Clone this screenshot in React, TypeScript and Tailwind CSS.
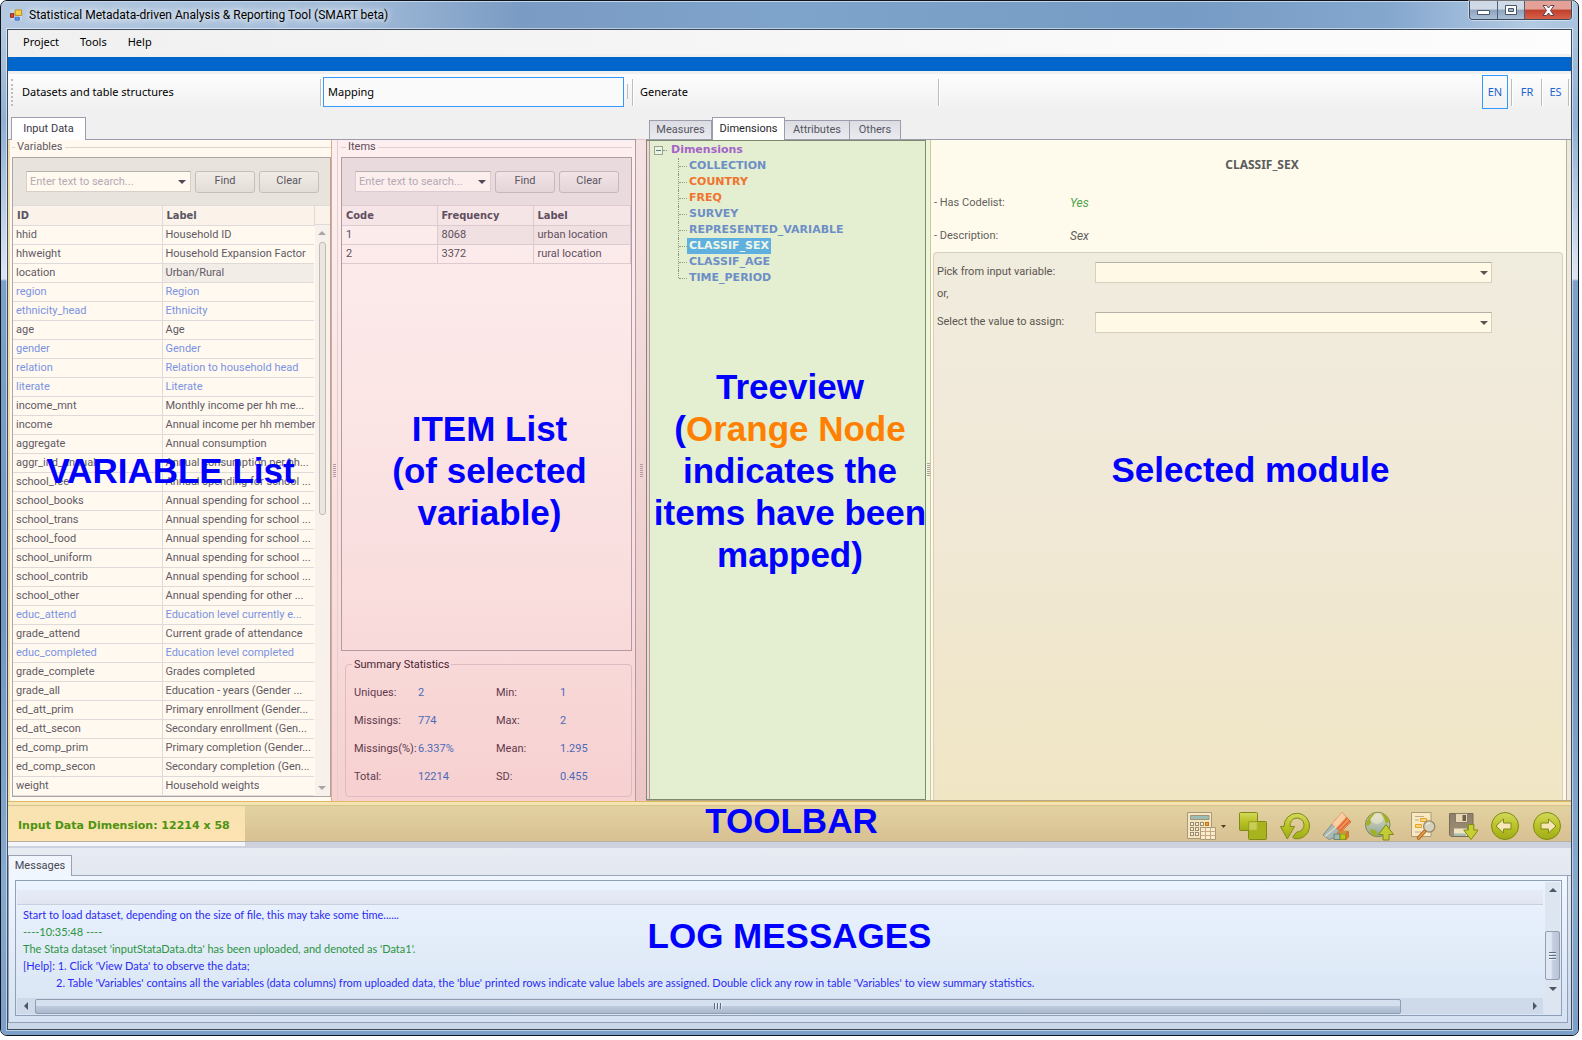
import type { ReactNode } from "react";

type VariableRow = { id: string; label: string; coded?: boolean };

const variables: VariableRow[] = [
  { id: "hhid", label: "Household ID" },
  { id: "hhweight", label: "Household Expansion Factor" },
  { id: "location", label: "Urban/Rural" },
  { id: "region", label: "Region", coded: true },
  { id: "ethnicity_head", label: "Ethnicity", coded: true },
  { id: "age", label: "Age" },
  { id: "gender", label: "Gender", coded: true },
  { id: "relation", label: "Relation to household head", coded: true },
  { id: "literate", label: "Literate", coded: true },
  { id: "income_mnt", label: "Monthly income per hh me..." },
  { id: "income", label: "Annual income per hh member" },
  { id: "aggregate", label: "Annual consumption" },
  { id: "aggr_ind_annual", label: "Annual consumption per hh..." },
  { id: "school_fee", label: "Annual spending for school ..." },
  { id: "school_books", label: "Annual spending for school ..." },
  { id: "school_trans", label: "Annual spending for school ..." },
  { id: "school_food", label: "Annual spending for school ..." },
  { id: "school_uniform", label: "Annual spending for school ..." },
  { id: "school_contrib", label: "Annual spending for school ..." },
  { id: "school_other", label: "Annual spending for other ..." },
  { id: "educ_attend", label: "Education level currently e...", coded: true },
  { id: "grade_attend", label: "Current grade of attendance" },
  { id: "educ_completed", label: "Education level completed", coded: true },
  { id: "grade_complete", label: "Grades completed" },
  { id: "grade_all", label: "Education - years (Gender ..." },
  { id: "ed_att_prim", label: "Primary enrollment (Gender..." },
  { id: "ed_att_secon", label: "Secondary enrollment (Gen..." },
  { id: "ed_comp_prim", label: "Primary completion (Gender..." },
  { id: "ed_comp_secon", label: "Secondary completion (Gen..." },
  { id: "weight", label: "Household weights" },
];

const treeNodes = [
  { name: "COLLECTION", tone: "text-[#6d8fc6]" },
  { name: "COUNTRY", tone: "text-[#f0742f]" },
  { name: "FREQ", tone: "text-[#f0742f]" },
  { name: "SURVEY", tone: "text-[#6d8fc6]" },
  { name: "REPRESENTED_VARIABLE", tone: "text-[#6d8fc6]" },
  { name: "CLASSIF_SEX", tone: "bg-[#5fb0df] text-[#eef7e6]" },
  { name: "CLASSIF_AGE", tone: "text-[#6d8fc6]" },
  { name: "TIME_PERIOD", tone: "text-[#6d8fc6]" },
];

const stats = [
  ["Uniques:", "2", "Min:", "1"],
  ["Missings:", "774", "Max:", "2"],
  ["Missings(%):", "6.337%", "Mean:", "1.295"],
  ["Total:", "12214", "SD:", "0.455"],
];

function Caption({ children, className = "" }: { children: ReactNode; className?: string }) {
  return (
    <div className={`pointer-events-none absolute inset-0 z-10 flex items-center justify-center text-center font-['Liberation_Sans',Arial,sans-serif] text-[35px] leading-[42px] font-bold whitespace-nowrap text-[#0000ff] ${className}`}>
      <p>{children}</p>
    </div>
  );
}

function Triangle({ dir, className = "" }: { dir: "up" | "down" | "left" | "right"; className?: string }) {
  const d = { up: "M0 5 4 1 8 5z", down: "M0 2h8L4 6z", left: "M6 0v8L2 4z", right: "M2 0v8l4-4z" }[dir];
  return (
    <svg viewBox="0 0 8 8" className={`size-2 shrink-0 ${className}`} fill="currentColor" aria-hidden="true">
      <path d={d} />
    </svg>
  );
}

function SearchBar({ name, tone, field, button, width }: { name: string; tone: string; field: string; button: string; width: string }) {
  return (
    <div className={`flex h-[47px] items-center gap-1 pl-[13px] ${tone}`}>
      <div className={`flex h-[21px] shrink-0 items-center border border-t-[#b5b0b0] ${width} ${field}`}>
        <input aria-label={`Search ${name}`} placeholder="Enter text to search..." className="h-full w-full min-w-0 bg-transparent pl-[3px] text-[11px] text-[#5f5b66] outline-none placeholder:text-[#b3aab2]" />
        <button aria-label={`${name} search history`} className="flex h-full w-4 shrink-0 items-center justify-center text-[#4f4a55]"><Triangle dir="down" /></button>
      </div>
      <button className={`h-[22px] w-[60px] shrink-0 rounded-[3px] border text-[11px] text-[#5a5562] ${button}`}>Find</button>
      <button className={`h-[22px] w-[60px] shrink-0 rounded-[3px] border text-[11px] text-[#5a5562] ${button}`}>Clear</button>
    </div>
  );
}

function Grip() {
  return (
    <svg width="3" height="14" viewBox="0 0 3 14" aria-hidden="true">
      {[0, 2, 4, 6, 8, 10, 12].map((y) => <path key={y} d={`M0 ${y + 0.5}h3`} stroke="#b59aa2" />)}
    </svg>
  );
}

function VariablesPanel() {
  return (
    <section className="relative w-[324px] shrink-0 border-r border-l-2 border-r-[#e0a88f] border-l-[#f0dcae] bg-[#fff9ef] pb-1 pl-0.5">
      <h2 className="flex h-[17px] items-start text-[11px] text-[#5f5b66]">
        <span className="mt-[7px] w-[3px] border-t border-[#dcd6d2]" />
        <span className="px-0.5 leading-[14px]">Variables</span>
        <span className="mt-[7px] flex-1 border-t border-[#dcd6d2]" />
      </h2>
      <div className="border border-[#aaa6a8]">
        <SearchBar name="variables" tone="bg-[#e8e4dd]" field="border-[#d8d0c8] bg-[#fff9ef]" button="border-[#c4bfba] bg-linear-to-b from-[#f1ede6] to-[#e2ded7]" width="w-[165px]" />
        <div className="flex">
          <table className="w-[301px] table-fixed border-collapse text-[11px] leading-[18px]">
            <colgroup><col className="w-[149px]" /><col className="w-[152px]" /></colgroup>
            <thead>
              <tr className="h-5 bg-[#fbf2ea] text-left font-['DejaVu_Sans_Condensed','DejaVu_Sans',sans-serif] text-[#5a5562]">
                <th className="border-t border-r border-b border-[#dedada] p-0 pl-1">ID</th>
                <th className="border-t border-r border-b border-[#dedada] p-0 pl-1">Label</th>
              </tr>
            </thead>
            <tbody>
              {variables.map((v) => (
                <tr key={v.id} className={v.coded ? "h-[19px] text-[#7b93e2]" : "h-[19px] text-[#5f5b66]"}>
                  <td className="border-r border-b border-[#dedada] p-0 pl-[3px]">{v.id}</td>
                  <td className={`border-b border-[#dedada] p-0 pl-[3px] whitespace-nowrap ${v.id === "location" ? "bg-[#f3ede8]" : ""}`}>{v.label}</td>
                </tr>
              ))}
            </tbody>
          </table>
          <div className="flex w-4 flex-col bg-[#f8f1eb]">
            <div className="h-5 border-t border-b border-[#dedada] bg-[#fbf2ea]" />
            <div className="flex h-[17px] items-center justify-center text-[#a9a4a5]"><Triangle dir="up" /></div>
            <div className="mx-auto h-[273px] w-[7px] rounded-[3px] border border-[#c2bcb9] bg-[#ece6e0]" />
            <div className="mt-auto flex h-4 items-center justify-center text-[#a9a4a5]"><Triangle dir="down" /></div>
          </div>
        </div>
      </div>
      <Caption>VARIABLE List</Caption>
    </section>
  );
}

function ItemsPanel() {
  const cell = "border-r border-b border-[#ddcace] p-0 pl-1";
  return (
    <section className="relative flex min-w-0 flex-1 flex-col px-[3px] pb-1">
      <h2 className="flex h-[17px] items-start text-[11px] text-[#5f4a58]">
        <span className="mt-[7px] w-[5px] border-t border-[#e3cdd0]" />
        <span className="px-0.5 leading-[14px]">Items</span>
        <span className="mt-[7px] flex-1 border-t border-[#e3cdd0]" />
      </h2>
      <div className="flex-1 border border-[#b39aa2]">
        <SearchBar name="items" tone="bg-[#e8dadd]" field="border-[#dccbd0] bg-[#fdeeee]" button="border-[#c9b6bb] bg-linear-to-b from-[#f2e4e6] to-[#e3d5d8]" width="w-[136px]" />
        <table className="w-full table-fixed border-collapse text-[11px] leading-[18px] text-[#5f4f60]">
          <colgroup><col className="w-[95px]" /><col className="w-24" /><col /></colgroup>
          <thead>
            <tr className="h-5 bg-[#f5e5e6] text-left font-['DejaVu_Sans_Condensed','DejaVu_Sans',sans-serif]">
              <th className={`border-t ${cell}`}>Code</th>
              <th className={`border-t ${cell}`}>Frequency</th>
              <th className={`border-t ${cell}`}>Label</th>
            </tr>
          </thead>
          <tbody>
            <tr className="h-[19px]"><td className={cell}>1</td><td className={`bg-[#f0e0e2] ${cell}`}>8068</td><td className={`bg-[#f0e0e2] ${cell}`}>urban location</td></tr>
            <tr className="h-[19px]"><td className={cell}>2</td><td className={cell}>3372</td><td className={cell}>rural location</td></tr>
          </tbody>
        </table>
      </div>
      <fieldset className="mt-1.5 ml-1 h-[140px] rounded border border-[#dcbcc2] pl-1.5 text-[11px] text-[#5f3a4c]">
        <legend className="px-0.5 leading-[15px] text-[#4a2433]">Summary Statistics</legend>
        <dl className="grid grid-cols-[64px_78px_64px_1fr] gap-y-[13px] pt-[13px] pl-0.5 leading-[15px]">
          {stats.flatMap(([a, b, c, d]) => [
            <dt key={a}>{a}</dt>, <dd key={a + "v"} className="text-[#4a6cb8]">{b}</dd>,
            <dt key={c}>{c}</dt>, <dd key={c + "v"} className="text-[#4a6cb8]">{d}</dd>,
          ])}
        </dl>
      </fieldset>
      <Caption className="pl-1.5">ITEM List<br />(of selected<br />variable)</Caption>
    </section>
  );
}

function TreePanel() {
  return (
    <section className="relative flex w-[280px] shrink-0 border border-[#7c8a6e] bg-[#e4eed1]">
      <div className="w-[3px] border-r border-[#b39aa2] bg-[#f2d6d6]" />
      <div className="flex-1 pt-px font-['DejaVu_Sans',Verdana,sans-serif] text-[11px] leading-4 font-bold">
        <div className="flex items-center pl-1 text-[#a465c9]">
          <button aria-label="Collapse Dimensions" className="flex size-[9px] items-center justify-center border border-[#98a394] bg-[#eef4e2]"><span className="h-px w-[5px] bg-[#5a7a8a]" /></button>
          <span className="mr-1 w-1 border-t border-dotted border-[#8a9a80]" />
          Dimensions
        </div>
        <ul>
          {treeNodes.map((n, i) => (
            <li key={n.name} className="flex h-4 pl-7">
              <span className={`w-px border-l border-dotted border-[#8a9a80] ${i === treeNodes.length - 1 ? "h-2" : "h-4"}`} />
              <span className="mt-2 w-2 border-t border-dotted border-[#8a9a80]" />
              <span className={`px-0.5 ${n.tone}`}>{n.name}</span>
            </li>
          ))}
        </ul>
      </div>
      <Caption className="pt-0.5 pl-2">
        Treeview<br />(<span className="text-[#ff8000]">Orange Node</span><br />indicates the<br />items have been<br />mapped)
      </Caption>
    </section>
  );
}

function Picker({ id, label }: { id: string; label: string }) {
  return (
    <div className="flex h-[21px] items-center">
      <label htmlFor={id} className="w-[158px] shrink-0">{label}</label>
      <div className="relative h-[21px] w-[397px]">
        <select id={id} className="h-full w-full appearance-none border border-[#d6d0c0] border-t-[#b5b1a6] bg-[#fff9e6]"><option></option></select>
        <Triangle dir="down" className="pointer-events-none absolute top-[7px] right-1 text-[#5a5550]" />
      </div>
    </div>
  );
}

function DetailPanel() {
  return (
    <section className="relative flex flex-1 flex-col border-r border-l border-r-[#b5b0a4] border-l-[#d3c692] bg-linear-to-b from-[#fffbec] to-[#fff8ea] pr-[3px] pl-0.5 text-[11px] text-[#625f5c]">
      <h2 className="pt-[17px] pl-7 text-center font-['Noto_Sans',sans-serif] text-xs leading-4 font-bold text-[#5c5c5c]">CLASSIF_SEX</h2>
      <dl className="grid grid-cols-[136px_1fr] gap-y-[17px] pt-[22px] pb-2 pl-px leading-4">
        <dt>- Has Codelist:</dt><dd className="text-xs leading-4 text-[#4fa24c] italic">Yes</dd>
        <dt>- Description:</dt><dd className="text-xs leading-4 italic">Sex</dd>
      </dl>
      <div className="flex-1 rounded-t border-t border-r border-l border-[#d5d0c0] bg-linear-to-b from-[#f0ecde] via-[#f1e8d6] via-50% to-[#f0e6c4] pt-[9px] pl-[3px] text-[#5a5650]">
        <Picker id="input-variable" label="Pick from input variable:" />
        <p className="pt-[3px] pb-[11px] leading-[15px]">or,</p>
        <Picker id="assigned-value" label="Select the value to assign:" />
      </div>
      <Caption className="pl-1">Selected module</Caption>
    </section>
  );
}

const G = "url(#leaf)";
const E = "#7f8a17";

function Icon({ children }: { children: ReactNode }) {
  return <svg width="30" height="30" viewBox="0 0 30 30" aria-hidden="true">{children}</svg>;
}

const tools: { name: string; icon: ReactNode }[] = [
  {
    name: "Copy",
    icon: <Icon><rect x="1.5" y="1.5" width="18" height="18" rx="1" fill={G} stroke={E} /><rect x="10.5" y="10.5" width="18" height="18" rx="1" fill="#a9b31d" stroke={E} /><path d="M11 11h8v8h-8z" fill="#c9cc55" stroke="#b5ba38" /></Icon>,
  },
  {
    name: "Refresh",
    icon: <Icon><path d="M4 15.500A12.800 12.800 0 1 1 14 27.600L12.600 26l4.200-5A7 7 0 1 0 10.200 15.500h4.300L7.300 28 .5 15.500z" fill={G} stroke={E} strokeLinejoin="round" /></Icon>,
  },
  {
    name: "Clear mapping",
    icon: (
      <Icon>
        <path d="M1 24 10 13l9 8-6 5.500-6 2z" fill="#a9b8b0" stroke="#7f938f" />
        <path d="M10 13 20 1.500l9 9.500-10 10z" fill="#ee9a63" stroke="#d9773a" />
        <path d="m10 13 10-11.500 4 4.500-10 11z" fill="#f8cfa5" />
        <path d="m15.500 18 10-11M17.500 20 28 9.500" stroke="#e2612a" strokeWidth="1.200" />
        <path d="M3 25.500 14 16" stroke="#d5dccb" strokeWidth="1.500" />
        <path d="m15 22 2-2h9l-2 2z" fill="#f39a3b" stroke="#b5701c" strokeWidth=".6" />
        <path d="M12 23h6v5.500h-6z" fill="#9dbbb4" stroke="#5f7468" strokeWidth=".8" />
        <path d="M18 23h6v5.500h-6z" fill="#b9c618" stroke={E} strokeWidth=".8" />
        <path d="m24 23 2.500-2.500V26L24 28.500z" fill="#e9821f" stroke="#a75a12" strokeWidth=".6" />
      </Icon>
    ),
  },
  {
    name: "Upload",
    icon: (
      <Icon>
        <circle cx="13.700" cy="13.500" r="12.300" fill="url(#globe)" stroke="#83894c" />
        <path d="M2 14C3 7 7 3 11 2l-2 4-3 2 1 4-3 3zM17 2c4 1 7 4 8.500 8L22 13l-2-6zM6 18l5 1 3 4-3 2.500C8 24 6 21 6 18z" fill="#a3b024" />
        <ellipse cx="13" cy="8" rx="6" ry="5" fill="#f3ead0" opacity=".55" />
        <path d="m22 13.500 7.500 10H25V29h-6v-5.500h-4.500z" fill="#c4cc35" stroke={E} strokeLinejoin="round" />
      </Icon>
    ),
  },
  {
    name: "Preview",
    icon: (
      <Icon>
        <path d="M5.500 1.500h19.500v24H5.500z" fill="#f8e9c3" stroke="#a99a78" />
        <path d="M9 5.500h9M9 9h4M20 9h2M18 15h3M9 21h6" stroke="#b9ab8c" />
        <path d="M14.500 7.500h6v3h-6zM9.500 13.500h6v3h-6z" fill="#f9d68c" stroke="#eda31a" />
        <circle cx="23.200" cy="15.500" r="5.600" fill="#d4d2bc" stroke="#94866f" strokeWidth="1.300" />
        <path d="M20.500 14.500a3 3 0 0 1 3.500-2.500" stroke="#f6f1dc" fill="none" />
        <path d="m18.500 20.500-6 6.500" stroke="#a8611a" strokeWidth="3.400" strokeLinecap="round" />
        <path d="m18.500 20.500-6 6.500" stroke="#ee9d45" strokeWidth="1.800" strokeLinecap="round" />
      </Icon>
    ),
  },
  {
    name: "Save",
    icon: (
      <Icon>
        <path d="M1.500 2.500h23.500v23H3l-1.500-1.500z" fill="url(#disk)" stroke="#7a6c55" />
        <path d="M7.500 2.500h12v9h-12z" fill="#e6d6b3" stroke="#8b7d63" />
        <path d="M14.500 4h3.500v6h-3.500z" fill="#6c604c" />
        <path d="M6 17.500h13V25H6z" fill="#f2e4c0" />
        <path d="M6 22.500h12V25H6z" fill="#a9bcb2" />
        <path d="M20.300 13.500h5.500V19h4.500L23 28.500 15.700 19h4.600z" fill="#c8d030" stroke={E} strokeLinejoin="round" />
      </Icon>
    ),
  },
  {
    name: "Previous",
    icon: <Icon><circle cx="15" cy="15" r="13.500" fill={G} stroke={E} /><path d="M6 15 13.500 8v4h7.500v6h-7.500v4z" fill="#f7e6b8" stroke={E} strokeLinejoin="round" /></Icon>,
  },
  {
    name: "Next",
    icon: <Icon><circle cx="15" cy="15" r="13.500" fill={G} stroke={E} /><path d="M24 15 16.500 8v4H9v6h7.500v4z" fill="#f7e6b8" stroke={E} strokeLinejoin="round" /></Icon>,
  },
];

function Toolbar() {
  return (
    <div className="relative border-b border-[#b5b0a0] bg-linear-to-b from-[#e4d5a3] to-[#d8c092]">
      <svg width="0" height="0" className="absolute" aria-hidden="true">
        <defs>
          <linearGradient id="leaf" x1="0" y1="0" x2="0" y2="1"><stop offset="0" stopColor="#d3d95e" /><stop offset=".5" stopColor="#bac326" /><stop offset="1" stopColor="#9fac17" /></linearGradient>
          <linearGradient id="globe" x1="0" y1="0" x2="0" y2="1"><stop offset="0" stopColor="#dfe0c2" /><stop offset="1" stopColor="#8da39a" /></linearGradient>
          <linearGradient id="disk" x1="0" y1="0" x2="0" y2="1"><stop offset="0" stopColor="#8d7f69" /><stop offset="1" stopColor="#9d9078" /></linearGradient>
        </defs>
      </svg>
      <div className="h-[5px] border-t border-b border-t-[#e2b864] border-b-[#d5c28c] bg-[#f3e4b2]" />
      <div className="flex h-[35px] justify-between">
        <p className="flex w-[237px] items-center bg-linear-to-b from-[#f7e3b0] to-[#fde2b2] pt-1.5 pl-2.5 font-['DejaVu_Sans',Verdana,sans-serif] text-[11px] font-bold whitespace-nowrap text-[#4c9410]">Input Data Dimension: 12214 x 58</p>
        <div className="flex items-end gap-3 pr-[9px]">
          <button aria-label="Calculate" className="flex w-10 items-center gap-[5px]">
            <Icon>
              <path d="M1.500 1.500h24v26h-24z" fill="#f6e6c0" stroke="#a8997c" />
              <path d="M4.500 4.500h18.500v4H4.500z" fill="#9dbdb4" stroke="#a0957a" />
              {[4.5, 9.5, 14.5, 19.5].map((x) => [11.5, 16.5, 21.5].map((y) => (
                <rect key={`${x}-${y}`} x={x} y={y} width="3" height="3" fill={x > 19 && y < 12 ? "#eda13a" : "#faf0d4"} stroke={x > 19 && y < 12 ? "#c9721b" : "#9a8c70"} />
              )))}
              <path d="M14.500 16.500h15v12h-15z" fill="#faecc8" stroke="#a8977a" />
              <path d="M19.500 16.500v12M24.500 16.500v12M14.500 20.500h15M14.500 24.500h15" stroke="#c4a988" />
            </Icon>
            <svg width="5" height="3" viewBox="0 0 5 3" aria-hidden="true"><path d="M0 0h5L2.500 3z" fill="#4f3f20" /></svg>
          </button>
          {tools.map((t) => (
            <button key={t.name} aria-label={t.name}>{t.icon}</button>
          ))}
        </div>
      </div>
      <Caption className="pl-1">TOOLBAR</Caption>
    </div>
  );
}

function Messages() {
  return (
    <div className="relative bg-linear-to-b from-[#e8ecf3] to-[#cbd7e8] pb-1.5">
      <div className="h-1.5 bg-[#cdd2de]"><div className="h-1 w-[237px] bg-[#f3f5fb]" /></div>
      <div className="flex h-7 items-end">
        <button className="h-[21px] w-[64px] border-t border-r border-l border-[#9aa1b4] bg-[#f1f5fe] text-[11px] text-[#45454f]">Messages</button>
        <span className="flex-1 border-b border-[#9aa5b8]" />
      </div>
      <div className="mr-[3px] h-[147px] border-r border-b border-l border-[#8f9fbc] bg-linear-to-b from-[#f1f7fe] to-[#d6e2f2] px-[5px] pt-1 pb-1.5 pl-1.5">
        <div className="flex h-full border border-[#8f9fb8] bg-linear-to-b from-[#ebf3fe] to-[#d9e5f4] p-px">
          <div className="flex min-w-0 flex-1 flex-col">
            <div className="mt-2 h-[15px] border-b border-[#c8d0de] bg-linear-to-b from-[#e6ecf7] to-[#e0e5f1]" />
            <pre className="flex-1 overflow-hidden pt-px pl-1.5 font-['Lato',Arial,sans-serif] text-[11px] leading-[17px] text-[#2a2af5]">
              <span className="block">Start to load dataset, depending on the size of file, this may take some time......</span>
              <span className="block text-[#2a9440]">----10:35:48 ----</span>
              <span className="block text-[#2a9440]">The Stata dataset 'inputStataData.dta' has been uploaded, and denoted as 'Data1'.</span>
              <span className="block">[Help]: 1. Click 'View Data' to observe the data;</span>
              <span className="block pl-[33px]">2. Table 'Variables' contains all the variables (data columns) from uploaded data, the 'blue' printed rows indicate value labels are assigned. Double click any row in table 'Variables' to view summary statistics.</span>
            </pre>
            <div className="flex h-4 items-center bg-[#cedaea] text-[#4a5566]">
              <span className="flex w-[18px] justify-center"><Triangle dir="left" /></span>
              <div className="flex h-[15px] w-[1366px] min-w-0 items-center justify-center gap-px rounded-[2px] border border-[#8f9db0] bg-linear-to-b from-[#d5e0ef] from-45% via-[#bccadd] via-50% to-[#abb8cd]">
                {[0, 1, 2].map((i) => <span key={i} className="h-1.5 w-0.5 border-l border-[#5f6d82] bg-white/60" />)}
              </div>
              <span className="ml-auto flex w-4 justify-center"><Triangle dir="right" /></span>
            </div>
          </div>
          <div className="ml-0.5 flex w-[15px] flex-col items-center bg-[#dde5f0] text-[#4a5566]">
            <span className="flex h-[17px] items-center"><Triangle dir="up" /></span>
            <div className="mt-8 flex h-[49px] w-[15px] flex-col items-center justify-center gap-px rounded-[2px] border border-[#929eb4] bg-linear-to-r from-[#dfe7f3] from-40% via-[#c6d0e1] via-50% to-[#b8c3d7]">
              {[0, 1, 2].map((i) => <span key={i} className="h-0.5 w-[7px] border-t border-[#5f6d82] bg-white/60" />)}
            </div>
            <span className="flex h-[17px] items-center"><Triangle dir="down" /></span>
          </div>
        </div>
      </div>
      <Caption>LOG MESSAGES</Caption>
    </div>
  );
}

function TitleBar() {
  return (
    <header className="flex h-7 items-start justify-between pl-[3px]">
      <h1 className="flex items-center gap-1.5 pt-1.5 text-xs leading-4 text-black [text-shadow:0_0_6px_#fff,0_0_10px_#fff]">
        <svg width="13" height="14" viewBox="0 0 14 14" aria-hidden="true">
          <path d="M.5 1h12.500v12H.5z" fill="#dce4ea" opacity=".5" />
          <path d="M5.500 1.500h7v6h-7z" fill="#f7cf4a" stroke="#b98a15" />
          <path d="M.5 5.500h3.500v4H.5z" fill="#d94a3a" stroke="#8f1f1a" />
          <path d="M5.500 9.500h4.500v3H5.500z" fill="#5b9af0" stroke="#3a6fc4" />
        </svg>
        Statistical Metadata-driven Analysis &amp; Reporting Tool (SMART beta)
      </h1>
      <div className="flex h-[19px] overflow-hidden rounded-b border-r border-b border-l border-[#3c4a5e] shadow-[0_0_0_1px_#ffffff70]">
        <button aria-label="Minimize" className="flex w-[28px] items-center justify-center border-r border-[#50607a] bg-linear-to-b from-[#cfdae6] from-45% via-[#8fa4bc] via-50% to-[#a9bfd6]">
          <svg width="13" height="12" viewBox="0 0 13 12" aria-hidden="true"><path d="M.5 6.500h12v4H.5z" fill="#fff" stroke="#4a5568" /></svg>
        </button>
        <button aria-label="Maximize" className="flex w-[27px] items-center justify-center border-r border-[#50607a] bg-linear-to-b from-[#cfdae6] from-45% via-[#8fa4bc] via-50% to-[#a9bfd6]">
          <svg width="12" height="11" viewBox="0 0 12 11" aria-hidden="true"><path d="M.5.5h11v9H.5z" fill="#fff" stroke="#4a5568" /><path d="M3.500 3.500h5v3h-5z" fill="#9fb2c8" stroke="#4a5568" /></svg>
        </button>
        <button aria-label="Close" className="flex w-[46px] items-center justify-center bg-linear-to-b from-[#e3a197] from-45% via-[#bf3f2a] via-50% to-[#d8604a]">
          <svg width="13" height="11" viewBox="0 0 13 11" aria-hidden="true"><path d="M1 .5h3.500l2 2.500 2-2.500H12L8.500 5.500l3.500 5H8.500l-2-2.500-2 2.500H1l3.500-5z" fill="#fff" stroke="#5a4550" strokeLinejoin="round" /></svg>
        </button>
      </div>
    </header>
  );
}

function StepStrip() {
  const rule = <span className="h-[27px] w-0.5 border-l border-[#bdbdbd] bg-white" />;
  return (
    <div className="mt-[3px] flex h-[37px] items-center justify-between bg-linear-to-b from-[#fdfdfd] to-[#f0f0f0] pb-px font-['Noto_Sans',sans-serif] text-[11px] text-black">
      <div className="flex items-center">
        <span className="ml-[3px] h-[27px] border-l-2 border-dotted border-[#bdbdbd]" />
        <button className="w-[307px] pl-[9px] text-left">Datasets and table structures</button>
        {rule}
        <button className="ml-px h-[30px] w-[301px] border border-[#3399ff] bg-[#fafafa] pl-1 text-left">Mapping</button>
        <span className="ml-[3px]">{rule}</span>
        <span className="ml-1 flex">{rule}</span>
        <button className="w-[304px] pl-1.5 text-left">Generate</button>
        {rule}
      </div>
      <div className="flex items-center pr-px text-[#1c63d2]">
        <button className="h-[34px] w-[26px] border border-[#3399ff]">EN</button>
        <span className="ml-[3px] flex">{rule}</span>
        <button className="w-7">FR</button>
        {rule}
        <button className="w-[25px]">ES</button>
        {rule}
      </div>
    </div>
  );
}

const tab = "h-[19px] border-t border-r border-[#9c9cac] bg-linear-to-b from-[#dcdde3] to-[#eaebf0] text-[#55555f]";

export default function App() {
  return (
    <div className="min-h-screen bg-white pr-[3px] pb-1 font-['Roboto',Tahoma,sans-serif] text-[11px]">
      <div className="rounded-[7px] border border-[#10141c] bg-[linear-gradient(90deg,#b4c9e1_0,#a3bcd9_22%,#7a9bc3_33%,#7fa4cb_50%,#769bc4_75%,#84a7ce_88%,#b3cae2_97%,#a9c3de_100%)]">
        <div className="rounded-[6px] border-t border-[#e4eef8]/70 bg-[linear-gradient(180deg,transparent_0,transparent_30px,#8fb0d4_120px,#d9e4f2_270px,#d9e4f2_277px,#7da1c8_279px,#7497c2_60%,#86a9cf_85%,#7b9fc8_100%)] px-1.5 pb-[5px]">
          <div className="-mt-px"><TitleBar /></div>
          <div className="border border-[#3c4a5e] bg-[#f0f0f0] shadow-[0_0_0_1px_#ffffff80]">
            <nav className="flex h-6 items-center gap-[21px] bg-linear-to-r from-[#f0f0f0] to-[#fdfdfd] pl-[15px] font-['Noto_Sans',sans-serif] text-[11px] text-black">
              <button>Project</button>
              <button>Tools</button>
              <button>Help</button>
            </nav>
            <div className="mt-[3px] h-3.5 bg-[#0066cc]" />
            <StepStrip />
            <main className="flex">
              <div className="flex w-[628px] shrink-0 flex-col">
                <div className="flex h-[29px] items-end border-b border-[#9c9cac] pl-[3px]">
                  <button className="-mb-px h-[23px] w-[75px] border-t border-r border-l border-[#9c9cac] bg-white text-[#3a3a48]">Input Data</button>
                </div>
                <div className="flex flex-1 border-r border-[#b39aa2]">
                  <VariablesPanel />
                  <div className="flex flex-1 bg-linear-to-b from-[#fdefef] via-[#fae0e0] via-60% to-[#f7d0d0]">
                    <div className="flex w-1.5 items-center justify-center border-r border-[#e3cdd0]"><Grip /></div>
                    <ItemsPanel />
                  </div>
                </div>
              </div>
              <div className="mt-[28px] flex w-2.5 shrink-0 items-center justify-center border-t border-[#e3c4c4] bg-linear-to-b from-[#f5e2e2] to-[#ecc6c6]"><Grip /></div>
              <div className="flex min-w-0 flex-1 flex-col">
                <div className="flex h-[29px] items-end border-b border-[#9c9cac] pl-[3px]">
                  <button className={`w-[63px] border-l ${tab}`}>Measures</button>
                  <button className="-mb-px h-[23px] w-[73px] border-t border-r border-l border-[#9c9cac] bg-white text-[#1f1f2c]">Dimensions</button>
                  <button className={`w-[65px] ${tab}`}>Attributes</button>
                  <button className={`w-[51px] ${tab}`}>Others</button>
                </div>
                <div className="flex flex-1 border-b border-[#b5ab8c] bg-[#efe9da] pr-1">
                  <TreePanel />
                  <div className="flex w-1 items-center justify-center bg-[#ecf6dc]"><Grip /></div>
                  <DetailPanel />
                </div>
              </div>
            </main>
            <Toolbar />
            <Messages />
          </div>
        </div>
      </div>
    </div>
  );
}
